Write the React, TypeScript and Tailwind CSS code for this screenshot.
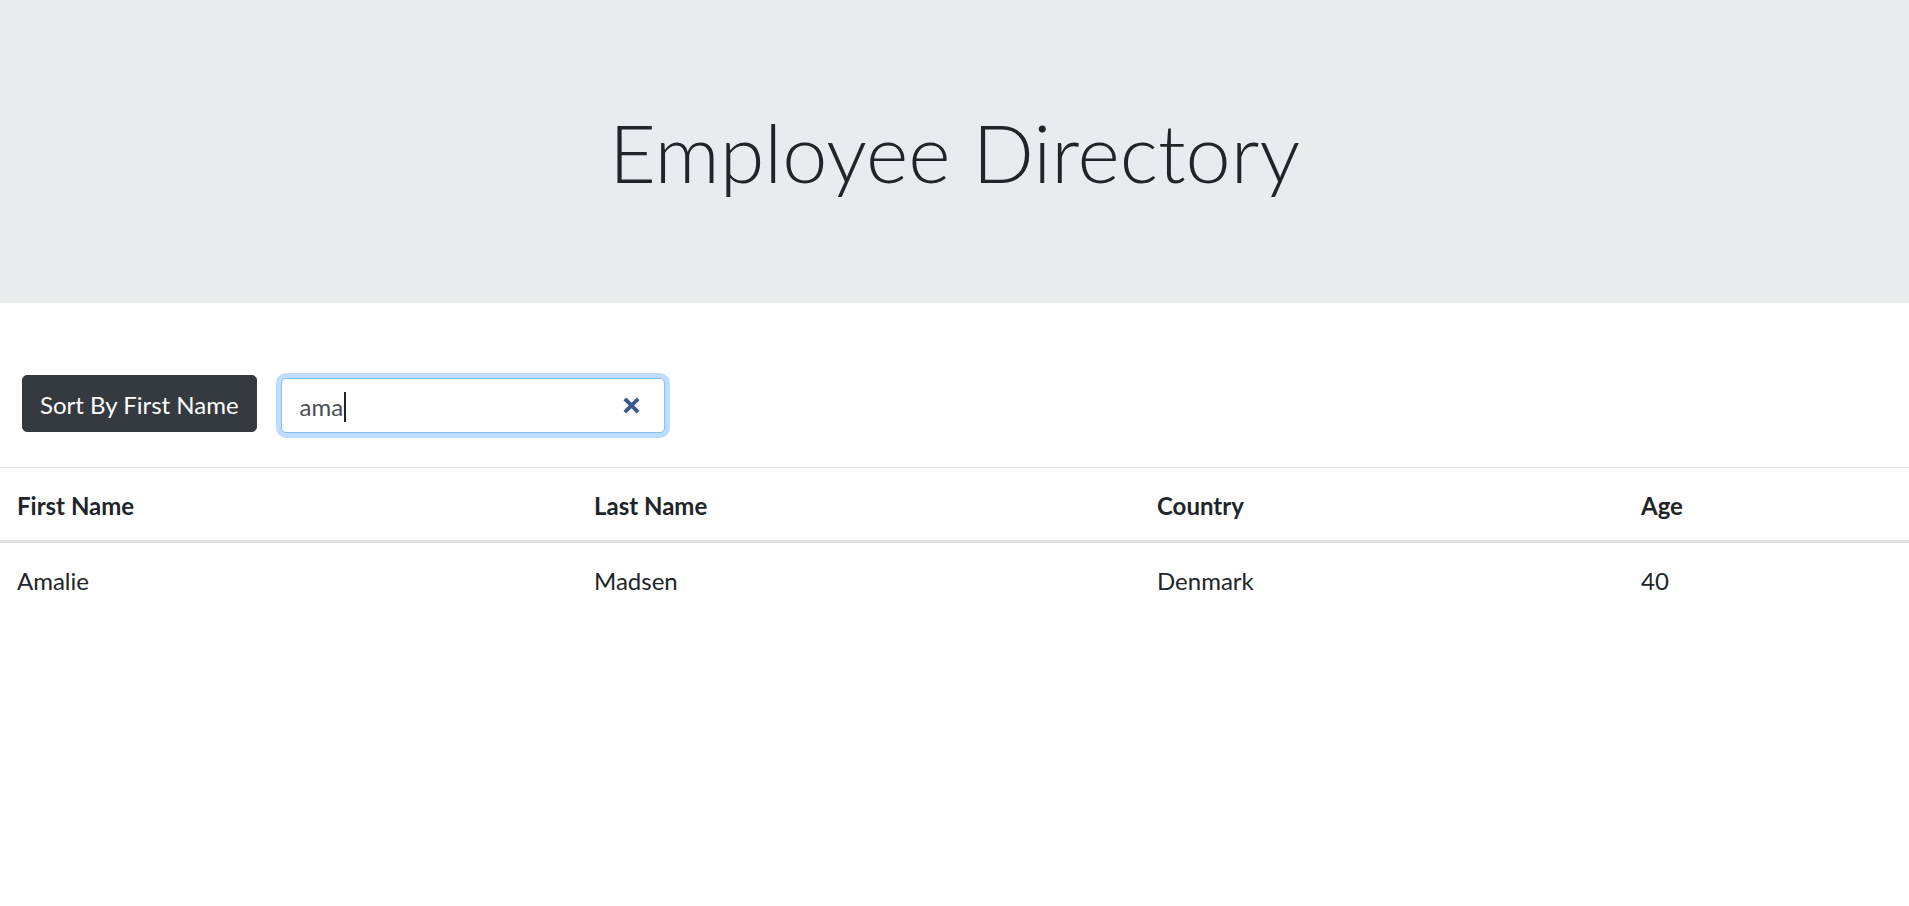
const EMPLOYEES = [
  { first: "Amalie", last: "Madsen", country: "Denmark", age: 40 },
];

const FONT = "font-['Lato','Liberation_Sans',sans-serif]";

export default function App() {
  return (
    <div className={`min-h-screen bg-white text-[24px] leading-[1.5] text-[#212529] ${FONT}`}>
      <header className="flex h-[303px] items-center justify-center bg-[#e9ecef]">
        <h1 className="text-[81px] leading-[1.2] font-light">Employee Directory</h1>
      </header>

      <div className="mt-[72px] flex items-start gap-[24px] px-[22px]">
        <button className="h-[57px] rounded-[5px] border border-[#343a40] bg-[#343a40] px-[17px] pt-[3px] text-[24px] text-white">
          Sort By First Name
        </button>
        <div className="mt-[3px] flex h-[55px] w-[384px] items-center rounded-[5px] border border-[#80bdff] bg-white pt-[3px] pr-[24px] pl-[18px] shadow-[0_0_0_5px_rgba(0,123,255,0.25)]">
          <span className="text-[#495057]">ama</span>
          <span className="ml-px h-[30px] w-[2px] bg-[#212529]" />
          <svg viewBox="0 0 16 16" className="mb-[4px] ml-auto h-[17px] w-[17px] text-[#3a5a8c]" fill="none">
            <path d="M3 3l10 10M13 3L3 13" stroke="currentColor" strokeWidth="3.6" strokeLinecap="square" />
          </svg>
        </div>
      </div>

      <table className="mt-[34px] w-full border-collapse text-left">
        <thead>
          <tr className="border-t border-b-[3px] border-t-[#dee2e6] border-b-[#dee2e6]">
            <th className="w-[577px] px-[17px] pt-[20px] pb-[16px] font-bold">First Name</th>
            <th className="w-[563px] px-[17px] pt-[20px] pb-[16px] font-bold">Last Name</th>
            <th className="w-[484px] px-[17px] pt-[20px] pb-[16px] font-bold">Country</th>
            <th className="px-[17px] pt-[20px] pb-[16px] font-bold">Age</th>
          </tr>
        </thead>
        <tbody>
          {EMPLOYEES.map((e) => (
            <tr key={e.first}>
              <td className="px-[17px] pt-[20px] pb-[16px]">{e.first}</td>
              <td className="px-[17px] pt-[20px] pb-[16px]">{e.last}</td>
              <td className="px-[17px] pt-[20px] pb-[16px]">{e.country}</td>
              <td className="px-[17px] pt-[20px] pb-[16px]">{e.age}</td>
            </tr>
          ))}
        </tbody>
      </table>
    </div>
  );
}
